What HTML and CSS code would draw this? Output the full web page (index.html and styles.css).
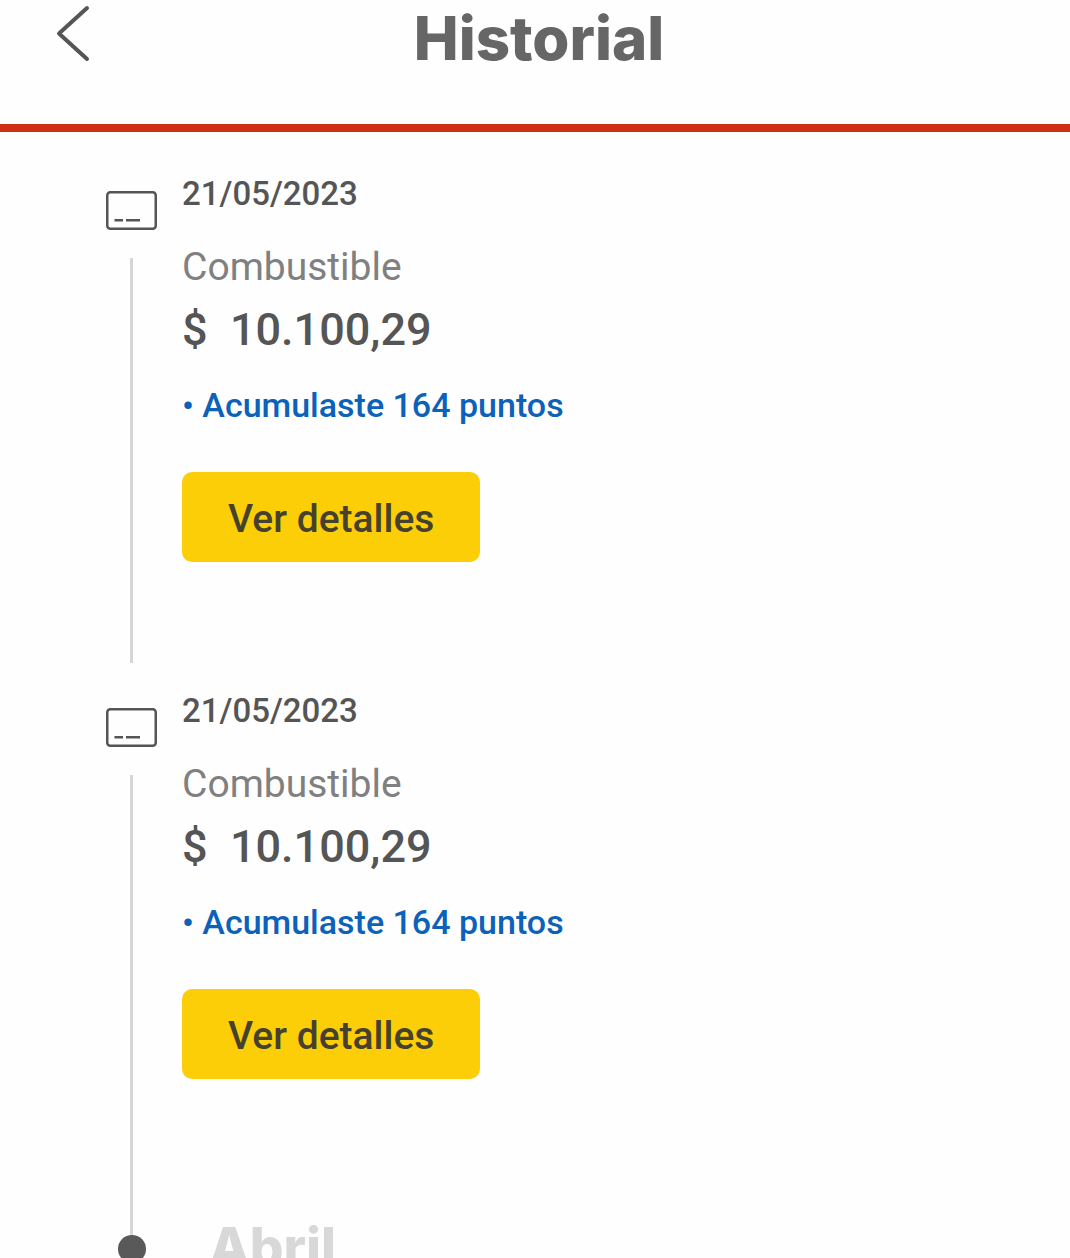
FILE: index.html
```html
<!DOCTYPE html>
<html lang="es">
<head>
<meta charset="utf-8">
<meta name="viewport" content="width=device-width, initial-scale=1">
<title>Historial</title>
<link rel="stylesheet" href="styles.css">
</head>
<body>
<header class="header">
  <button class="back" type="button" aria-label="Volver">
    <svg width="36" height="58" viewBox="0 0 36 58" fill="none" stroke="#555" stroke-width="4" stroke-linecap="round" stroke-linejoin="round" aria-hidden="true"><path d="M31 4 3 29.500 31 55"/></svg>
  </button>
  <h1 class="title">Historial</h1>
</header>
<main class="timeline">
  <article class="entry">
    <div class="rail">
      <svg class="card-icon" width="53" height="40" viewBox="0 0 53 40" fill="none" stroke="#555" stroke-width="2.500" aria-hidden="true"><rect x="2.250" y="2.250" width="48.500" height="36.500" rx="3"/><path d="M9.500 30.300h8.500M21 30.300h14"/></svg>
      <span class="line"></span>
    </div>
    <div class="details">
      <time class="date" datetime="2023-05-21">21/05/2023</time>
      <p class="kind">Combustible</p>
      <p class="amount">$&nbsp; 10.100,29</p>
      <p class="points">• Acumulaste 164 puntos</p>
      <button class="more" type="button">Ver detalles</button>
    </div>
  </article>
  <article class="entry entry-last">
    <div class="rail">
      <svg class="card-icon" width="53" height="40" viewBox="0 0 53 40" fill="none" stroke="#555" stroke-width="2.500" aria-hidden="true"><rect x="2.250" y="2.250" width="48.500" height="36.500" rx="3"/><path d="M9.500 30.300h8.500M21 30.300h14"/></svg>
      <span class="line"></span>
    </div>
    <div class="details">
      <time class="date" datetime="2023-05-21">21/05/2023</time>
      <p class="kind">Combustible</p>
      <p class="amount">$&nbsp; 10.100,29</p>
      <p class="points">• Acumulaste 164 puntos</p>
      <button class="more" type="button">Ver detalles</button>
    </div>
  </article>
  <section class="month">
    <div class="month-rail">
      <span class="month-line"></span>
      <span class="dot"></span>
    </div>
    <h2 class="month-name">Abril</h2>
  </section>
</main>
</body>
</html>
```
FILE: styles.css
```css
* {
  box-sizing: border-box;
}

body {
  display: flex;
  flex-direction: column;
  height: 100vh;
  margin: 0;
  overflow: hidden;
  background: #fefefe;
  color: #555;
  font-family: Roboto, "Liberation Sans", sans-serif;
}

h1,
h2,
p {
  margin: 0;
}

button {
  border: 0;
  font-family: inherit;
  cursor: pointer;
}

.header {
  display: grid;
  grid-template-columns: 92px 1fr 84px;
  flex: none;
  align-items: start;
  padding-bottom: 48px;
  border-bottom: 8px solid #cf2e17;
}

.back {
  display: flex;
  justify-content: flex-end;
  padding: 4px 0 0;
  background: none;
}

.title {
  color: #666;
  font-family: Inter, "Open Sans", sans-serif;
  font-size: 60px;
  font-weight: 800;
  line-height: 76px;
  text-align: center;
}

.timeline {
  flex: 1;
  min-height: 0;
  padding: 41px 24px 0 105px;
  overflow-y: auto;
  scrollbar-width: none;
}

.entry,
.month {
  display: flex;
  gap: 24px;
}

.rail {
  display: flex;
  flex-direction: column;
  flex: none;
  align-items: center;
  gap: 28px;
  width: 53px;
  padding: 17px 0 27px;
}

.entry-last .rail {
  padding-bottom: 0;
}

.card-icon {
  flex: none;
}

.line {
  flex: 1;
  width: 3px;
  background: #d6d6d6;
}

.details {
  flex: 1;
  padding-bottom: 128px;
}

.date {
  display: block;
  font-size: 33px;
  font-weight: 500;
  line-height: 42px;
}

.kind {
  margin-top: 27px;
  color: #808080;
  font-size: 39px;
  line-height: 50px;
}

.amount {
  margin-top: 10px;
  font-size: 45px;
  font-weight: 500;
  line-height: 56px;
}

.points {
  margin-top: 27px;
  color: #0c61b8;
  font-size: 34px;
  font-weight: 500;
  line-height: 40px;
}

.more {
  margin-top: 47px;
  padding: 4px 46px 0;
  border-radius: 10px;
  background: #fbce07;
  color: #45412e;
  font-size: 39px;
  font-weight: 500;
  line-height: 86px;
}

.month-rail {
  display: flex;
  flex-direction: column;
  flex: none;
  align-items: center;
  width: 53px;
}

.month-line {
  width: 3px;
  height: 28px;
  background: #d6d6d6;
}

.dot {
  width: 28px;
  height: 28px;
  border-radius: 50%;
  background: #595959;
}

.month-name {
  padding-left: 27px;
  color: #d8d8d8;
  font-family: Inter, "Open Sans", sans-serif;
  font-size: 53px;
  font-weight: 800;
  line-height: 80px;
}
```
